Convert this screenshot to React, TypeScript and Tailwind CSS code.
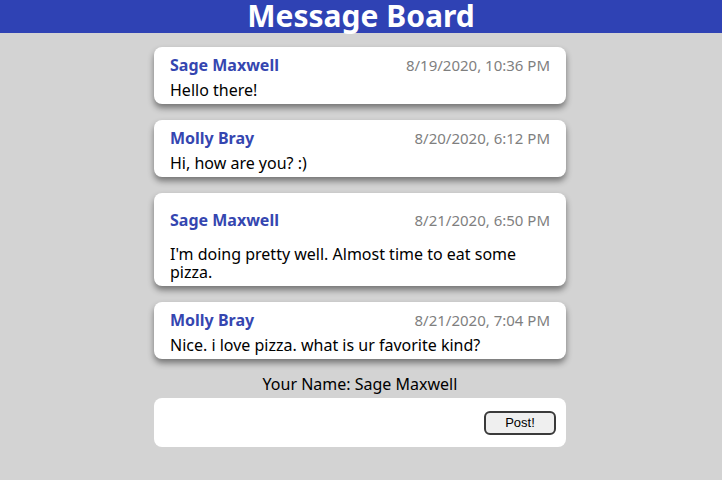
const messages = [
  { name: "Sage Maxwell", date: "8/19/2020, 10:36 PM", text: "Hello there!" },
  { name: "Molly Bray", date: "8/20/2020, 6:12 PM", text: "Hi, how are you? :)" },
  { name: "Sage Maxwell", date: "8/21/2020, 6:50 PM", text: "I'm doing pretty well. Almost time to eat some pizza.", tall: true },
  { name: "Molly Bray", date: "8/21/2020, 7:04 PM", text: "Nice. i love pizza. what is ur favorite kind?" },
];

function Card({ m }: { m: (typeof messages)[number] }) {
  return (
    <div
      className={`bg-white rounded-lg px-4 shadow-[0_4px_6px_rgba(0,0,0,0.45)] ${
        m.tall ? "pt-[17px] pb-[5px]" : "pt-2 pb-1"
      }`}
    >
      <div className="flex justify-between items-center h-5">
        <span className="font-bold text-[#3546b0]">{m.name}</span>
        <span className="text-[#7f7f7f] text-[15px]">{m.date}</span>
      </div>
      <p className={m.tall ? "mt-[15px] leading-[18px]" : "mt-[5px] leading-5"}>{m.text}</p>
    </div>
  );
}

export default function App() {
  return (
    <div className="min-h-[480px] bg-[#d3d3d3] font-['Noto_Sans',sans-serif] text-black text-base">
      <header className="h-[33px] bg-[#2f42b4] text-center">
        <h1 className="text-white font-bold text-[30px] leading-[31px]">Message Board</h1>
      </header>
      <main className="w-[412px] ml-[154px] pt-[14px] flex flex-col gap-4">
        {messages.map((m, i) => (
          <Card key={i} m={m} />
        ))}
        <div className="-mt-[1px] flex flex-col items-center">
          <p className="leading-5">Your Name: Sage Maxwell</p>
          <div className="mt-[4px] w-full h-[49px] bg-white rounded-lg flex items-center justify-end pr-[10px]">
            <button className="w-[72px] h-[24px] rounded-md border-2 border-[#3a3a3a] bg-[#efefef] font-['Liberation_Sans',sans-serif] text-[13px]">
              Post!
            </button>
          </div>
        </div>
      </main>
    </div>
  );
}
